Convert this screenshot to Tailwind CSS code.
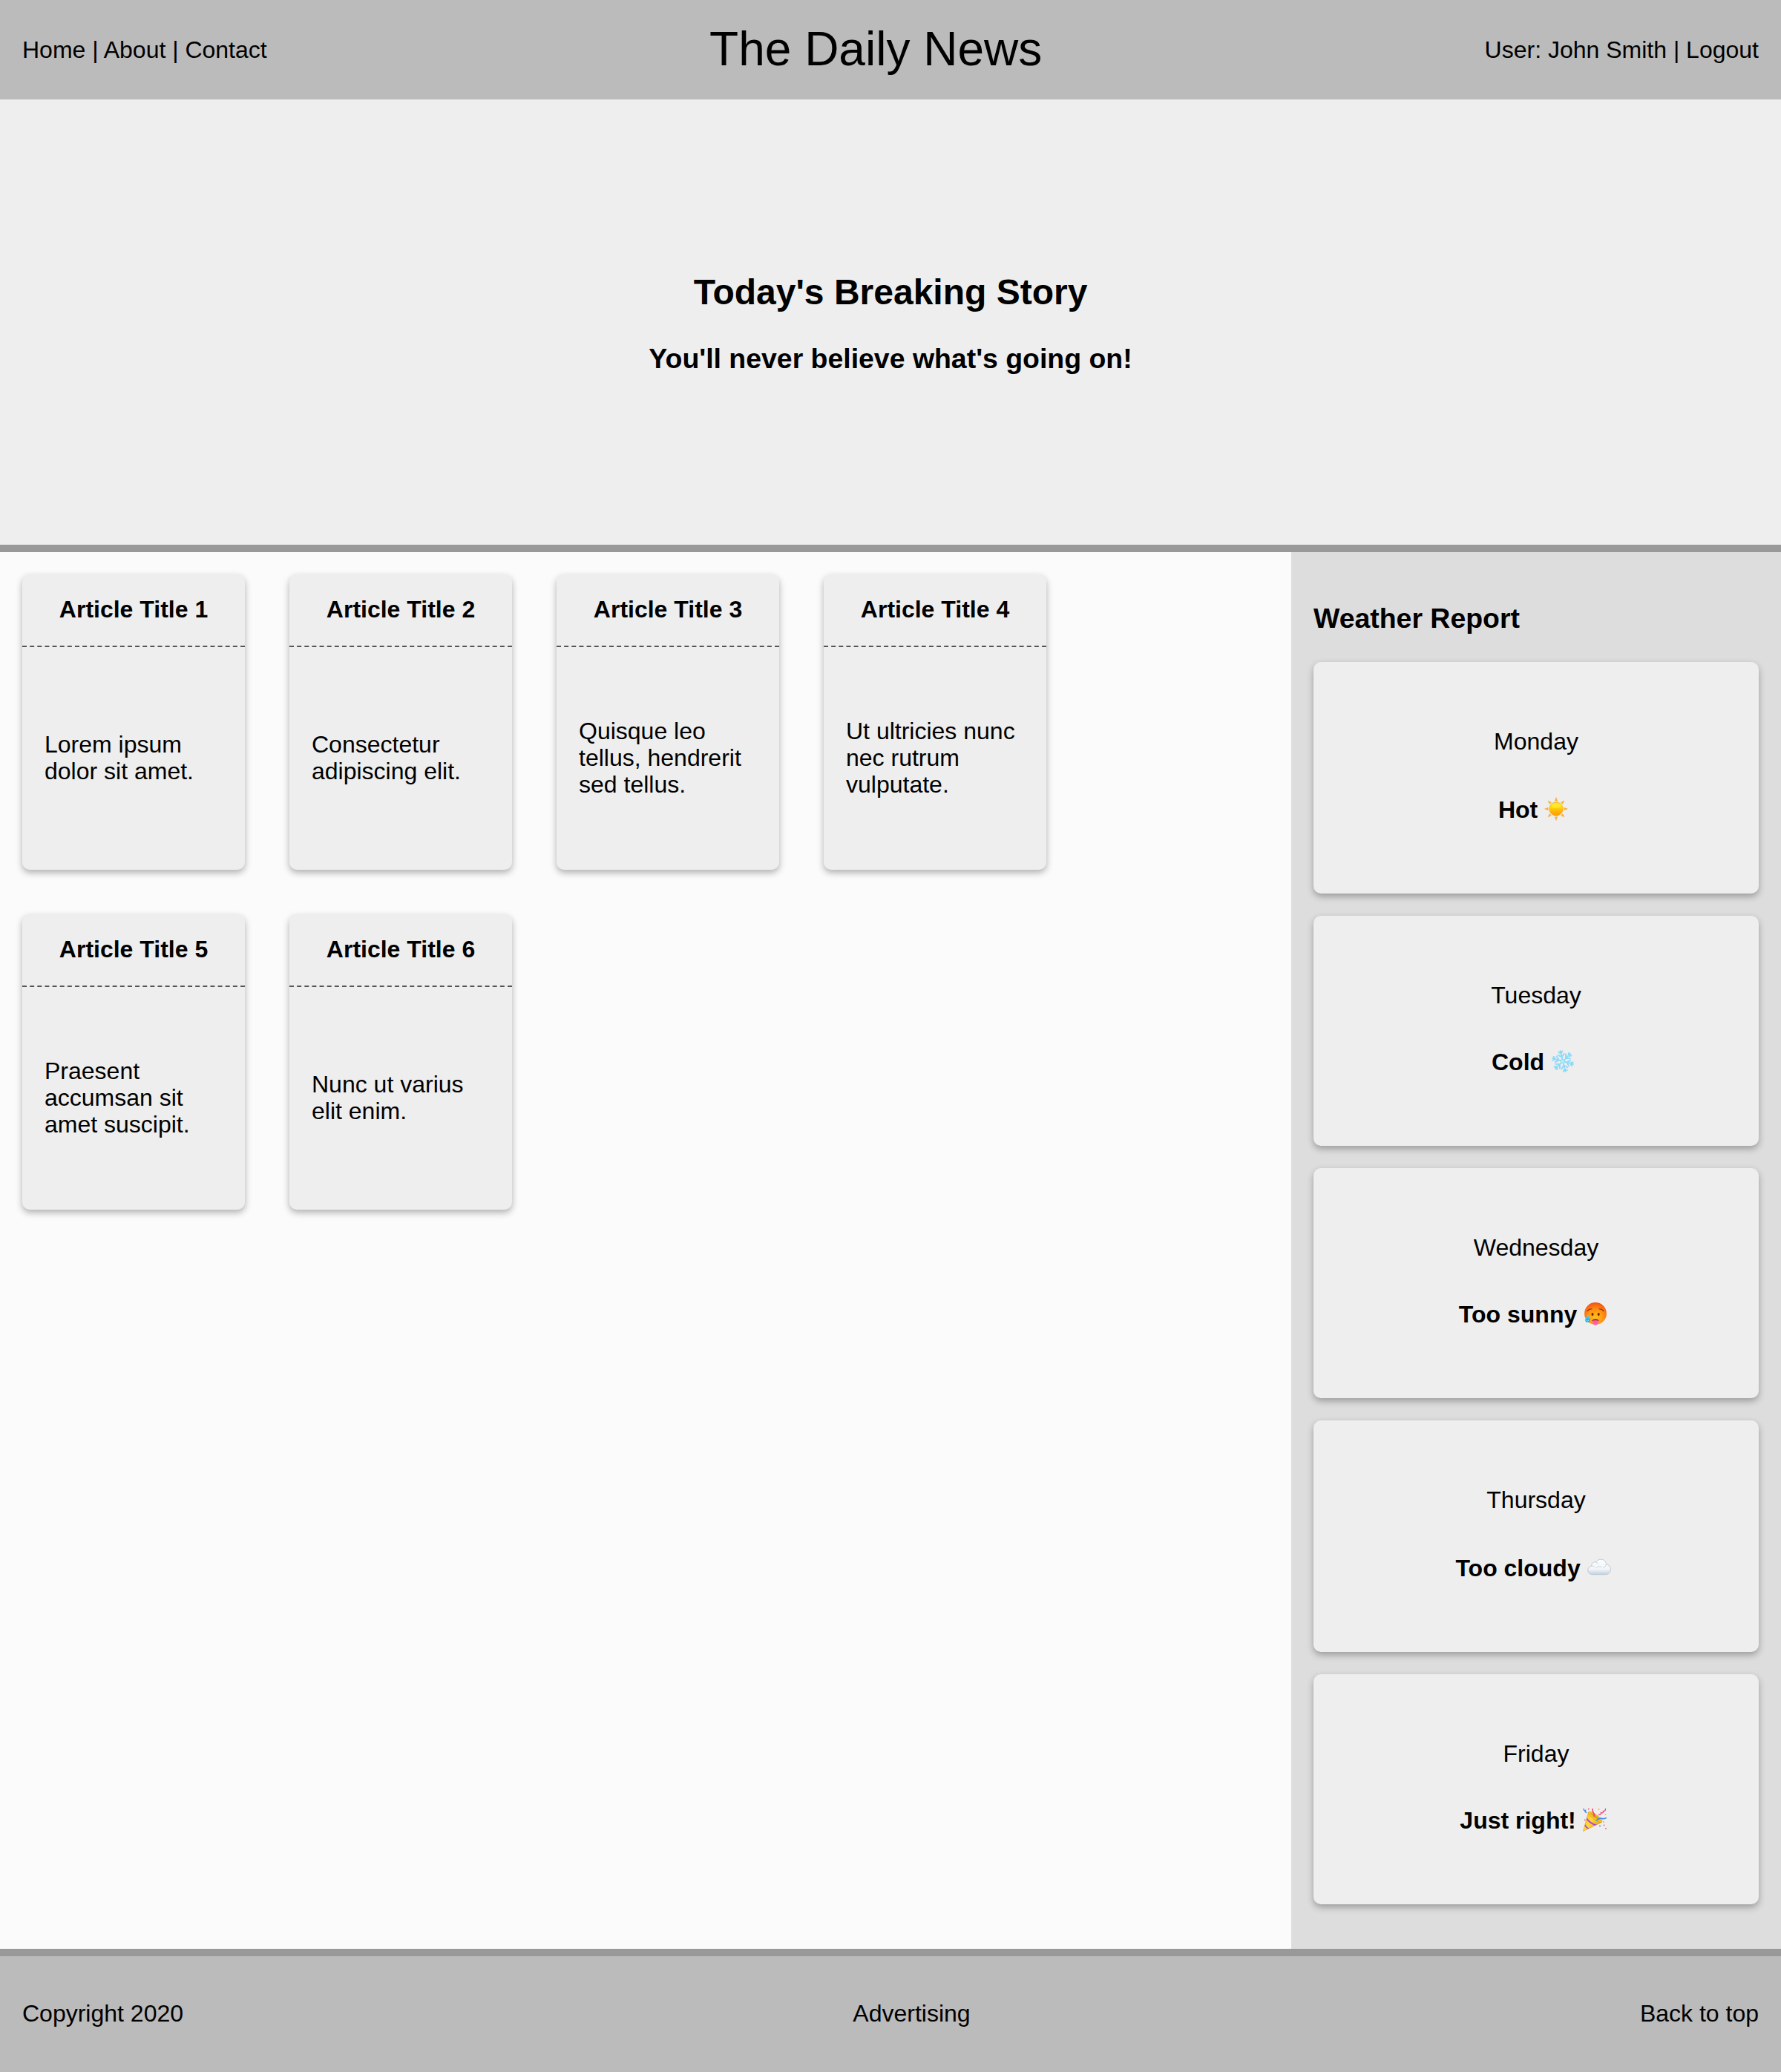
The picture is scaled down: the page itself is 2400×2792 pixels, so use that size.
<!DOCTYPE html>
<html lang="en">
<head>
<meta charset="utf-8">
<title>The Daily News</title>
<script src="https://cdn.jsdelivr.net/npm/@tailwindcss/browser@4"></script>
</head>
<body class="flex min-h-screen flex-col bg-[#fbfbfb] font-['Liberation_Sans',Arial,sans-serif] text-[32px] leading-[36px] text-black">

<header class="flex h-[134px] shrink-0 items-center justify-between bg-[#bbb] px-[30px]">
  <nav>Home | About | Contact</nav>
  <h1 class="pb-[2px] text-[64px] leading-[74px]">The Daily News</h1>
  <div>User: John Smith | Logout</div>
</header>

<section class="flex h-[610px] shrink-0 flex-col items-center border-b-[10px] border-[#999] bg-[#eee] pt-[233px] font-bold">
  <h2 class="mb-[41px] text-[48px] leading-[54px]">Today's Breaking Story</h2>
  <h3 class="text-[37.44px] leading-[42px]">You'll never believe what's going on!</h3>
</section>

<div class="flex h-[1882px] shrink-0">
  <main class="grid flex-1 grid-cols-[repeat(4,300px)] content-start gap-[60px] p-[30px]">
    <article class="h-[398px] rounded-[10px] bg-[#eee] shadow-[0_4px_10px_rgba(0,0,0,0.3)]">
      <h4 class="h-[98px] border-b-2 border-dashed border-[#555] pt-[29px] text-center font-bold">Article Title 1</h4>
      <div class="flex h-[300px] items-center px-[30px] pb-[2px]"><p>Lorem ipsum dolor sit amet.</p></div>
    </article>
    <article class="h-[398px] rounded-[10px] bg-[#eee] shadow-[0_4px_10px_rgba(0,0,0,0.3)]">
      <h4 class="h-[98px] border-b-2 border-dashed border-[#555] pt-[29px] text-center font-bold">Article Title 2</h4>
      <div class="flex h-[300px] items-center px-[30px] pb-[2px]"><p>Consectetur adipiscing elit.</p></div>
    </article>
    <article class="h-[398px] rounded-[10px] bg-[#eee] shadow-[0_4px_10px_rgba(0,0,0,0.3)]">
      <h4 class="h-[98px] border-b-2 border-dashed border-[#555] pt-[29px] text-center font-bold">Article Title 3</h4>
      <div class="flex h-[300px] items-center px-[30px] pb-[2px]"><p>Quisque leo tellus, hendrerit sed tellus.</p></div>
    </article>
    <article class="h-[398px] rounded-[10px] bg-[#eee] shadow-[0_4px_10px_rgba(0,0,0,0.3)]">
      <h4 class="h-[98px] border-b-2 border-dashed border-[#555] pt-[29px] text-center font-bold">Article Title 4</h4>
      <div class="flex h-[300px] items-center px-[30px] pb-[2px]"><p>Ut ultricies nunc nec rutrum vulputate.</p></div>
    </article>
    <article class="h-[398px] rounded-[10px] bg-[#eee] shadow-[0_4px_10px_rgba(0,0,0,0.3)]">
      <h4 class="h-[98px] border-b-2 border-dashed border-[#555] pt-[29px] text-center font-bold">Article Title 5</h4>
      <div class="flex h-[300px] items-center px-[30px] pb-[2px]"><p>Praesent accumsan sit amet suscipit.</p></div>
    </article>
    <article class="h-[398px] rounded-[10px] bg-[#eee] shadow-[0_4px_10px_rgba(0,0,0,0.3)]">
      <h4 class="h-[98px] border-b-2 border-dashed border-[#555] pt-[29px] text-center font-bold">Article Title 6</h4>
      <div class="flex h-[300px] items-center px-[30px] pb-[2px]"><p>Nunc ut varius elit enim.</p></div>
    </article>
  </main>

  <aside class="flex w-[660px] flex-col gap-[30px] bg-[#ddd] px-[30px] pt-[68px] text-center">
    <h3 class="mb-[8px] h-[42px] text-left text-[37.44px] leading-[42px] font-bold">Weather Report</h3>

    <div class="h-[312px] shrink-0 rounded-[10px] bg-[#eee] pt-[89px] shadow-[0_4px_10px_rgba(0,0,0,0.3)]">
      <p>Monday</p>
      <p class="mt-[56px] font-bold">Hot <svg class="mr-[8px] inline-block size-[32px] align-[-4px]" viewBox="0 0 32 32">
        <defs><linearGradient id="sun" x1="0" y1="0" x2="0" y2="1"><stop offset="0" stop-color="#ffd21f"/><stop offset=".3" stop-color="#ffe000"/><stop offset=".6" stop-color="#ffbd0a"/><stop offset="1" stop-color="#ff9800"/></linearGradient></defs>
        <g fill="#fdb515" stroke="#f3a25c" stroke-width=".4">
          <path d="M16 .5L17.7 5.2H14.3Z"/>
          <path d="M16 .5L17.7 5.2H14.3Z" transform="rotate(45 16 16)"/>
          <path d="M16 .5L17.7 5.2H14.3Z" transform="rotate(90 16 16)"/>
          <path d="M16 .5L17.7 5.2H14.3Z" transform="rotate(135 16 16)"/>
          <path d="M16 .5L17.7 5.2H14.3Z" transform="rotate(180 16 16)"/>
          <path d="M16 .5L17.7 5.2H14.3Z" transform="rotate(225 16 16)"/>
          <path d="M16 .5L17.7 5.2H14.3Z" transform="rotate(270 16 16)"/>
          <path d="M16 .5L17.7 5.2H14.3Z" transform="rotate(315 16 16)"/>
        </g>
        <circle cx="16" cy="16" r="9.2" fill="url(#sun)" stroke="#f09a2a" stroke-width=".6"/>
        <ellipse cx="16" cy="11.5" rx="6.2" ry="3.4" fill="#fff04a" opacity=".55"/>
      </svg></p>
    </div>

    <div class="h-[310px] shrink-0 rounded-[10px] bg-[#eee] pt-[89px] shadow-[0_4px_10px_rgba(0,0,0,0.3)]">
      <p>Tuesday</p>
      <p class="mt-[54px] font-bold">Cold <svg class="mr-[8px] inline-block size-[32px] align-[-4px]" viewBox="0 0 32 32">
        <defs><path id="arm" d="M16 16V1.500M16 10.500L11.800 6.300M16 10.500L20.200 6.300M16 6L13.400 2.400M16 6L18.600 2.400"/>
        <g id="flake"><use href="#arm"/><use href="#arm" transform="rotate(60 16 16)"/><use href="#arm" transform="rotate(120 16 16)"/><use href="#arm" transform="rotate(180 16 16)"/><use href="#arm" transform="rotate(240 16 16)"/><use href="#arm" transform="rotate(300 16 16)"/></g></defs>
        <g fill="none" stroke-linecap="round" transform="rotate(-14 16 16)">
          <use href="#flake" stroke="#69c9f0" stroke-width="1.500"/>
          <use href="#flake" stroke="#a2e6ff" stroke-width=".7"/>
          <circle cx="16" cy="16" r="2.600" fill="#b5eeff" stroke="#7ad4f6" stroke-width=".7"/>
        </g>
      </svg></p>
    </div>

    <div class="h-[310px] shrink-0 rounded-[10px] bg-[#eee] pt-[89px] shadow-[0_4px_10px_rgba(0,0,0,0.3)]">
      <p>Wednesday</p>
      <p class="mt-[54px] font-bold">Too sunny <svg class="mr-[8px] inline-block size-[32px] align-[-4px]" viewBox="0 0 32 32">
        <defs><radialGradient id="face" cx=".5" cy=".68" r=".7"><stop offset="0" stop-color="#ffbf1e"/><stop offset=".45" stop-color="#ff9a12"/><stop offset=".8" stop-color="#fb6a10"/><stop offset="1" stop-color="#ee4a12"/></radialGradient>
        <linearGradient id="drop" x1="0" y1="0" x2="0" y2="1"><stop offset="0" stop-color="#5fdcff"/><stop offset="1" stop-color="#0a9bec"/></linearGradient></defs>
        <circle cx="16" cy="16" r="14.9" fill="url(#face)"/>
        <g fill="none" stroke="#8c2f08" stroke-width="1.1" stroke-linecap="round"><path d="M5 12.600Q7.200 9.600 11 9.800"/><path d="M27 12.600Q24.800 9.600 21 9.800"/></g>
        <ellipse cx="12" cy="16.900" rx="1.500" ry="2" fill="#6b2408"/><ellipse cx="20.200" cy="16.900" rx="1.500" ry="2" fill="#6b2408"/>
        <path d="M11.400 26C11.400 22.500 20.600 22.500 20.600 26L19.500 26.500H12.500Z" fill="#7a1608"/>
        <path d="M12 25.600Q16 24.400 20 25.600V27.800C20 32.900 12 32.900 12 27.800Z" fill="#ff62a6"/><path d="M16 25.500V28.300" stroke="#e23c86" stroke-width=".8"/>
        <path d="M5.600 17.200C6.600 20.200 8.600 22.300 8.600 24.600A3.200 3.200 0 0 1 2.200 24.600C2.200 22.300 4.800 20.200 5.600 17.200Z" fill="url(#drop)"/><path d="M3.600 25.200Q5.400 27 7.200 25.200" fill="none" stroke="#9aeaff" stroke-width=".9"/>
      </svg></p>
    </div>

    <div class="h-[312px] shrink-0 rounded-[10px] bg-[#eee] pt-[89px] shadow-[0_4px_10px_rgba(0,0,0,0.3)]">
      <p>Thursday</p>
      <p class="mt-[56px] font-bold">Too cloudy <svg class="mr-[8px] inline-block size-[32px] align-[-4px]" viewBox="0 0 32 32">
        <defs><linearGradient id="cloud" x1="0" y1="0" x2="0" y2="1"><stop offset="0" stop-color="#fbfcfd"/><stop offset=".65" stop-color="#f1f5f8"/><stop offset="1" stop-color="#c3d0dc"/></linearGradient></defs>
        <path d="M7 25.700C3.300 25.700 .8 23.200 .8 19.800C.8 16.800 2.900 14.500 5.800 14C5.400 10.800 8.200 8.200 11.600 9C13 6.400 15.600 5.200 18.400 5.200C22.400 5.200 25.200 8 25.500 12C29 12.300 31.300 14.900 31.300 18.300C31.300 22.600 28.400 25.700 24.300 25.700Z" fill="url(#cloud)" stroke="#b3c2d0" stroke-width=".8"/>
        <path d="M5.800 14Q8.500 13.500 10 15.500M11.600 9Q13.800 9.600 14.300 11.500M25.500 12Q24.800 15.500 21.500 16.500M12 17Q15 13 19 15.500" fill="none" stroke="#c3d0da" stroke-width=".9" stroke-linecap="round"/>
      </svg></p>
    </div>

    <div class="h-[310px] shrink-0 rounded-[10px] bg-[#eee] pt-[89px] shadow-[0_4px_10px_rgba(0,0,0,0.3)]">
      <p>Friday</p>
      <p class="mt-[54px] font-bold">Just right! <svg class="mr-[8px] inline-block size-[32px] align-[-4px]" viewBox="0 0 32 32">
        <defs><linearGradient id="cone" x1="0" y1="0" x2="1" y2=".6"><stop offset="0" stop-color="#f7b81b"/><stop offset=".5" stop-color="#ffd93a"/><stop offset="1" stop-color="#e39a12"/></linearGradient>
        <clipPath id="coneclip"><path d="M.4 31.500L7.600 6Q18 8 25.600 19.500Z"/></clipPath></defs>
        <path d="M.4 31.500L7.600 6Q18 8 25.600 19.500Z" fill="url(#cone)" stroke="#d9930f" stroke-width=".5" stroke-linejoin="round"/>
        <ellipse cx="16.600" cy="12.400" rx="11.200" ry="3.400" transform="rotate(36 16.600 12.400)" fill="#f4c229" stroke="#dd9c13" stroke-width=".6"/>
        <ellipse cx="17.300" cy="12" rx="8.400" ry="1.500" transform="rotate(36 17.300 12)" fill="#dba01c"/>
        <g clip-path="url(#coneclip)" fill="none" stroke="#a945dc" stroke-width="1.900"><path d="M4.500 13.500Q9 21 19 24"/><path d="M1.500 21Q4 27 10 29.500"/></g>
        <g fill="none" stroke-width="1.500" stroke-linecap="round">
          <path d="M18.500 17Q22 13 25 14.300T31.500 13.600" stroke="#3b8cf0"/>
          <path d="M15 11.500Q16 8.500 14.300 6.500T13 1.500" stroke="#ee3f70"/>
          <path d="M21.500 9.500Q25 9 24.500 6.500Q27.500 8 27.500 4.500Q30.500 5 30.500 1.500" stroke="#ee4478" stroke-width="1.300"/>
          <path d="M1 1.500Q1 4 3.500 3.500Q2 6.500 5 6" stroke="#3c82e8" stroke-width="1.300"/>
        </g>
        <circle cx="21.500" cy="2" r="1" fill="#ffae22"/><circle cx="7.800" cy="1.600" r=".9" fill="#e84a76"/><circle cx="2.800" cy="16.500" r=".9" fill="#ee5a87"/><circle cx="23" cy="24.500" r="1" fill="#4190ee"/><circle cx="28" cy="19" r="1" fill="#ffb12a"/><circle cx="28.500" cy="23.500" r="1" fill="#d98348"/><circle cx="31" cy="28" r=".9" fill="#ee5a87"/><circle cx="30.500" cy="9" r=".8" fill="#f4a53a"/>
      </svg></p>
    </div>
  </aside>
</div>

<footer class="flex h-[166px] shrink-0 items-center justify-between border-t-[10px] border-[#999] bg-[#bbb] px-[30px] pb-[2px]">
  <p>Copyright 2020</p>
  <p>Advertising</p>
  <p>Back to top</p>
</footer>
</body>
</html>
